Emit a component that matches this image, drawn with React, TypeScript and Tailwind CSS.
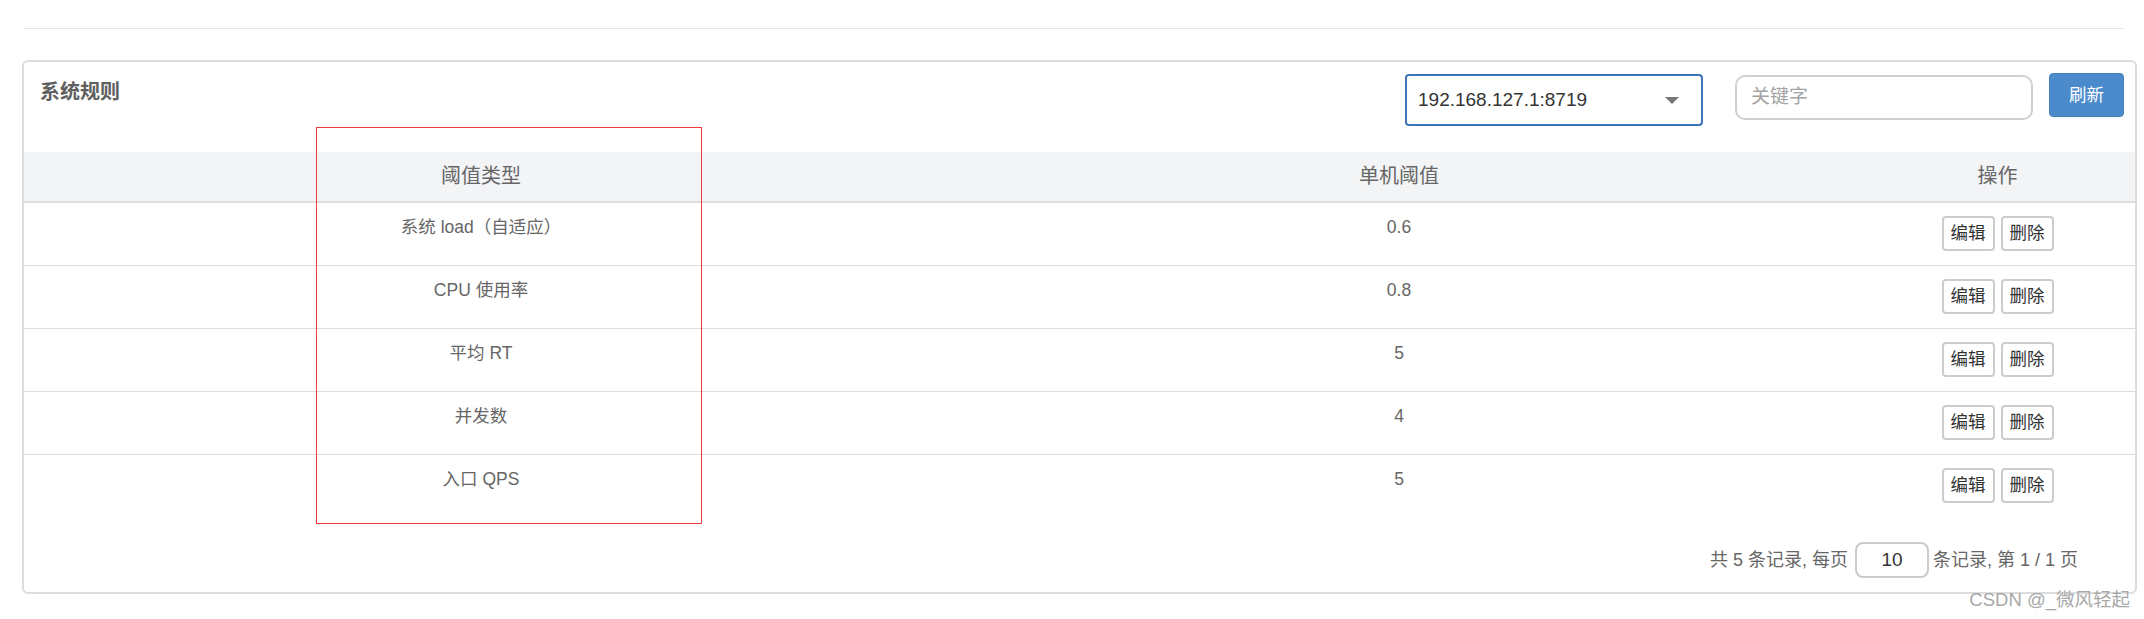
import React from "react";

const rows = [
  { type: "系统 load（自适应）", value: "0.6" },
  { type: "CPU 使用率", value: "0.8" },
  { type: "平均 RT", value: "5" },
  { type: "并发数", value: "4" },
  { type: "入口 QPS", value: "5" },
];

export default function App() {
  return (
    <div
      className="relative w-[2144px] h-[619px] bg-white overflow-hidden"
      style={{ fontFamily: '"Liberation Sans", "Noto Sans CJK SC", sans-serif' }}
    >
      <div className="pt-[28px] pl-[23px] pr-[20px]">
        <div className="h-px bg-[#e6e6e6]" />
      </div>

      <div className="mt-[31px] ml-[22px] mr-[7px] border-2 border-[#dcdcdc] rounded-[6px]">
        {/* panel header */}
        <div className="flex h-[90px] items-start">
          <div className="pl-[16px] pt-[18px] text-[20px] leading-[24px] font-bold text-[#5f5f5f] flex-1">
            系统规则
          </div>
          <div className="mt-[12px] w-[298px] h-[52px] border-2 border-[#3c76b8] rounded-[4px] flex items-center pl-[11px] pr-[22px]">
            <span className="flex-1 text-[19px] text-[#333]">192.168.127.1:8719</span>
            <svg width="14" height="7" viewBox="0 0 14 7">
              <polygon points="0,0 14,0 7,7" fill="#777" />
            </svg>
          </div>
          <div className="mt-[13px] ml-[32px] w-[298px] h-[45px] border-2 border-[#d0d0d0] rounded-[10px] flex items-center pl-[14px] text-[19px] text-[#a3a3a3]">
            关键字
          </div>
          <div className="mt-[11px] ml-[16px] mr-[11px] w-[75px] h-[44px] rounded-[4px] bg-[#4c8bcb] border border-[#4280c0] flex items-center justify-center text-white text-[17.5px]">
            刷新
          </div>
        </div>

        {/* table header */}
        <div className="grid grid-cols-[914px_922px_1fr] bg-[#f3f4f6] border-b-2 border-[#dddddd] text-[20px] leading-[49px] text-[#666]">
          <div className="text-center">阈值类型</div>
          <div className="text-center">单机阈值</div>
          <div className="text-center">操作</div>
        </div>

        {/* table rows */}
        {rows.map((r, i) => (
          <div
            key={i}
            className={`grid grid-cols-[914px_922px_1fr] h-[63px] text-[17.5px] text-[#666] ${
              i < rows.length - 1 ? "border-b border-[#dddddd]" : ""
            }`}
          >
            <div className="text-center pt-[11px] leading-[27px]">{r.type}</div>
            <div className="text-center pt-[11px] leading-[27px]">{r.value}</div>
            <div className="flex items-start justify-center gap-[6px] pt-[13px]">
              <button className="w-[53px] h-[35px] border-2 border-[#cccccc] rounded-[4px] bg-white text-[17.5px] text-[#333] flex items-center justify-center">
                编辑
              </button>
              <button className="w-[53px] h-[35px] border-2 border-[#cccccc] rounded-[4px] bg-white text-[17.5px] text-[#333] flex items-center justify-center">
                删除
              </button>
            </div>
          </div>
        ))}

        {/* pagination */}
        <div className="flex items-center justify-end pr-[57px] pt-[24px] pb-[14px] text-[18px] text-[#666]">
          <span>共 5 条记录, 每页</span>
          <div className="ml-[7px] mr-[4px] w-[74px] h-[36px] border-2 border-[#cccccc] rounded-[8px] flex items-center justify-center text-[19px] text-[#333]">
            10
          </div>
          <span>条记录, 第 1 / 1 页</span>
        </div>
      </div>

      {/* red highlight rectangle */}
      <div className="absolute left-[316px] top-[127px] w-[386px] h-[397px] border border-[#ee3a3a] pointer-events-none" />

      {/* watermark */}
      <div className="absolute right-[14px] top-[588px] text-[18.5px] leading-[24px] text-[#a8a8a8]">
        CSDN @_微风轻起
      </div>
    </div>
  );
}
